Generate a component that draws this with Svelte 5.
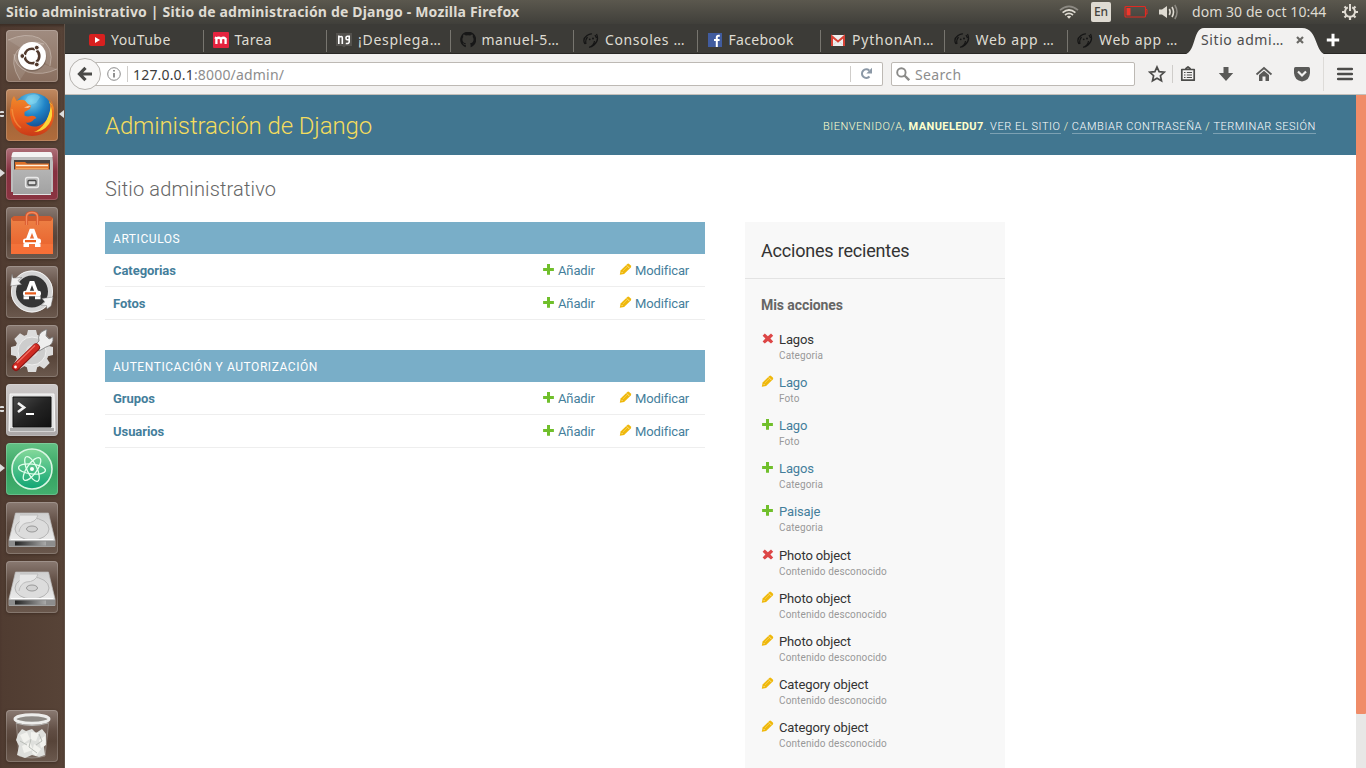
<script>
  const tabs = [
    { icon: 'youtube', label: 'YouTube', ls: 0.45 },
    { icon: 'mega', label: 'Tarea', ls: 0.35 },
    { icon: 'book', label: '¡Desplega…', ls: 0.72 },
    { icon: 'github', label: 'manuel-5…', ls: 0.5 },
    { icon: 'snake', label: 'Consoles …', ls: 0.6 },
    { icon: 'facebook', label: 'Facebook', ls: 0.3 },
    { icon: 'gmail', label: 'PythonAn…', ls: 0.8 },
    { icon: 'snake', label: 'Web app …', ls: 0.7 },
    { icon: 'snake', label: 'Web app …', ls: 0.7 }
  ];

  const launcher = [
    { id: 'dash', left: 0 },
    { id: 'firefox', left: 2, active: true },
    { id: 'files', left: 1 },
    { id: 'software', left: 0 },
    { id: 'updater', left: 0 },
    { id: 'settings', left: 0 },
    { id: 'terminal', left: 2 },
    { id: 'atom', left: 1 },
    { id: 'disk', left: 0 },
    { id: 'disk', left: 0 },
    { id: 'trash', left: 0 }
  ];

  const modules = [
    { name: 'Articulos', rows: ['Categorias', 'Fotos'] },
    { name: 'Autenticación y autorización', rows: ['Grupos', 'Usuarios'] }
  ];

  const actions = [
    { kind: 'delete', name: 'Lagos', type: 'Categoria' },
    { kind: 'change', name: 'Lago', type: 'Foto', link: true },
    { kind: 'add', name: 'Lago', type: 'Foto', link: true },
    { kind: 'add', name: 'Lagos', type: 'Categoria', link: true },
    { kind: 'add', name: 'Paisaje', type: 'Categoria', link: true },
    { kind: 'delete', name: 'Photo object', type: 'Contenido desconocido' },
    { kind: 'change', name: 'Photo object', type: 'Contenido desconocido' },
    { kind: 'change', name: 'Photo object', type: 'Contenido desconocido' },
    { kind: 'change', name: 'Category object', type: 'Contenido desconocido' },
    { kind: 'change', name: 'Category object', type: 'Contenido desconocido' }
  ];
</script>

{#snippet mark(kind)}
  <svg class="mark" viewBox="0 0 13 13" width="13" height="13">
    {#if kind === 'add'}
      <path d="M5 1h3v3.900h3.900v3H8v3.900H5V7.900H1.100v-3H5z" fill="#70bf2b" />
    {:else if kind === 'delete'}
      <path d="M3.800 1.600 6.900 4.200 10 1.600l2.200 2.200L9.400 6.600l2.800 2.800-2.200 2.200-3.100-2.600-3.100 2.600-2.200-2.200 2.800-2.800-2.800-2.800z" fill="#dd4646" />
    {:else}
      <path d="M.8 11.800l.8-4.200L8.300 1q.9-.8 1.800 0l1.700 1.600q.8.900 0 1.800L5.100 11z" fill="#efb80b" />
      <path d="M7.700 2.400l2.700 2.700M2.600 9l1 1" stroke="#fff" stroke-opacity=".8" stroke-width=".7" />
      <path d="M3.800 8l4.200-4.100" stroke="#f8d96b" stroke-width=".7" />
    {/if}
  </svg>
{/snippet}

{#snippet favicon(icon)}
  <svg class="favicon" viewBox="0 0 16 16" width="16" height="16">
    {#if icon === 'youtube'}
      <rect x="0" y="2" width="16" height="12" rx="2" fill="#d8201f" />
      <path d="M6 5l5 3-5 3z" fill="#fff" />
    {:else if icon === 'mega'}
      <rect width="16" height="16" rx="1" fill="#e5233f" />
      <path d="M3.400 12V6.800q2.300-2.200 4.600 0V11.500M8 6.800q2.300-2.200 4.600 0V12M1.800 5.500l2 .8" fill="none" stroke="#fff" stroke-width="2.300" />
    {:else if icon === 'book'}
      <path d="M0 1h16v13H10l-2 1.500L6 14H0z" fill="#54524e" />
      <path d="M2.800 12V3.500M2.300 4.500l2 .2q2-.6 2 1.300V12M13.200 7.800H11q-1-.2-1-1.700 0-1.800 1.500-1.800h1.700v5.500q0 2-3.400 1.700" fill="none" stroke="#fff" stroke-width="1.600" />
    {:else if icon === 'github'}
      <path d="M5.800 15.300v-2.500c-2 .5-2.700-.8-3.200-1.700 1.200.1 1.300 1.300 2.400 1.100.6 0 .8-.5 1-.9-2.200-.3-3.600-1.500-3.600-3.900 0-1 .3-1.800.9-2.400-.3-.8-.2-1.600.1-2.400 1 0 1.800.5 2.400.9a8.500 8.500 0 014.400 0c.7-.5 1.500-.9 2.400-.9.4.8.3 1.700.1 2.400.6.600.9 1.400.9 2.400 0 2.400-1.400 3.600-3.600 3.900.4.400.6.900.6 1.700v2.300a8 8 0 10-4.800 0z" fill="#171717" />
    {:else if icon === 'snake'}
      <path d="M2 12Q-1 7 4 3.500 7 1.500 9 2M3 12Q2 8 4.500 5M13.500 2Q16.500 8 11 13q-2.500 2.300-5 2.200M11.500 9Q11 13 7 15M12 3l1.500 3" fill="none" stroke="#151515" stroke-width="1.200" />
      <circle cx="6.700" cy="7.300" r=".9" fill="#151515" />
      <circle cx="10" cy="6.500" r="1" fill="#151515" />
    {:else if icon === 'facebook'}
      <rect x="1" y="1" width="14" height="14" fill="#415c9f" />
      <path d="M12.800 3.700h-1.300q-1.700 0-1.700 1.700V15M7 8h5.600" fill="none" stroke="#fff" stroke-width="2" />
    {:else}
      <path d="M1 3h14v11H1z" fill="#eee" />
      <path d="M2 14V4.500L8 9.500l6-5V14" fill="none" stroke="#d84236" stroke-width="2" />
      <path d="M3.500 13l3-3.500M12.500 13l-3-3.500" stroke="#ccc" stroke-width=".6" />
    {/if}
  </svg>
{/snippet}

{#snippet compass()}
  <path d="M21.300 33.500l3.700-10h2l3.700 10" fill="none" stroke="#fff" stroke-width="3.600" />
  <path d="M17.500 37h5.500v3h-5.500zM29 37h5.500v3H29z" fill="#fff" />
  <rect x="17" y="31.500" width="18" height="5.500" rx="2.200" fill="#fff" /><path d="M19 34.200h11" stroke="#ea5f1f" stroke-width="2.200" />
{/snippet}

{#snippet appicon(id)}
  <svg viewBox="0 0 52 52" width="52" height="52">
    {#if id === 'dash'}
      <g fill="none" stroke="#e6dbd4" stroke-opacity=".4" stroke-width="1">
        <path d="M2 10Q20 2 33 8 49 17 44 36" fill="#fff" fill-opacity=".1" />
        <path d="M14 50Q3 32 11 21 22 8 38 14" fill="#fff" fill-opacity=".1" />
        <path d="M51 39Q37 46 22 42 8 36 8 24" fill="#fff" fill-opacity=".1" />
      </g>
      <circle cx="26" cy="27" r="14.500" fill="#3b2a20" opacity=".3" />
      <circle cx="26" cy="26" r="14" fill="#fff" />
      <circle cx="26" cy="26" r="7.300" fill="none" stroke="#51392d" stroke-width="2.600" stroke-dasharray="13.700 1.600" stroke-dashoffset="6.800" />
      <g fill="#51392d" stroke="#fff" stroke-width="1">
        <circle cx="16.300" cy="26" r="2.400" /><circle cx="30.800" cy="17.600" r="2.400" /><circle cx="30.800" cy="34.500" r="2.400" />
      </g>
    {:else if id === 'firefox'}
      <circle cx="27" cy="24" r="20" fill="url(#globe)" />
      <path d="M22 7q9-4 12 1l-4 6-6 2-6-3z" fill="#8edcf2" opacity=".45" />
      <path d="M43 12q3 7 0 14-3 10-14 13 6 6 13-1 8-9 5-21z" fill="#ffce2b" />
      <path d="M8 7l2.500 5q4-2 8.500-.5Q21 15 25 16.500l-1 3.500-5.500 3v3.500q3 1.500 6 .5 4-1 6 2-3 1-4 3-3 2.500-7 1.500 5 5.500 13 3.500 9-3.500 11-12 2-6 0-12 3 3 3.500 8Q47 17 44 10q5 7 4 17-2 19-22 20Q9 46 5 30 3 22 5 17q0-6 3-10z" fill="url(#fox)" />
      <path d="M45 17q3 11-2 18-6 8-15 8 13-5 17-26z" fill="#ffe23c" opacity=".9" />
      <path d="M18 18.500l5-2 2 .5-3 2z" fill="#fac49a" />
      <path d="M6 20q1 13 9 19" fill="none" stroke="#f7a04a" stroke-width="1.500" opacity=".6" />
    {:else if id === 'files'}
      <path d="M8 4h36q1.500 0 2 2l1 8v30H5V14l1-8q.5-2 2-2z" fill="#bdbdbd" />
      <path d="M8 4h36q1.500 0 2 2l.6 3H5.400L6 6q.5-2 2-2z" fill="#f4f4f4" />
      <path d="M8 12h36v12H8z" fill="#494240" />
      <path d="M9 14h10l2 1.500h22V23H9z" fill="#dd6f27" />
      <path d="M10 17.500h32" stroke="#fff0dc" stroke-width="1.300" /><path d="M10 20.300h32" stroke="#f3a55c" stroke-width="1.200" />
      <path d="M7 21.500h38V46H7z" fill="url(#steel)" />
      <path d="M7 46.500h38" stroke="#e3e3e3" />
      <rect x="19.500" y="29.500" width="13" height="10" rx="2" fill="#b7b7b7" stroke="#e9e9e9" stroke-width="1.300" />
      <rect x="22" y="32.500" width="8" height="4.500" rx="1" fill="#ddd" stroke="#4a4a4a" stroke-width="1.300" />
    {:else if id === 'software'}
      <path d="M5 11h42v36H5z" fill="url(#bag)" />
      <path d="M5 37h42v10H5z" fill="#ff8a4c" opacity=".35" />
      <path d="M5 11l3-2h36l3 2-2 3H7z" fill="#d05a2c" />
      <path d="M20.500 18v-8q0-4.500 5.500-4.500t5.500 4.500v8" fill="none" stroke="#d8562b" stroke-width="3.200" />
      <path d="M20.500 18v-8q0-4.500 5.500-4.500t5.500 4.500v8" fill="none" stroke="#f28a5d" stroke-width="1.400" />
      {@render compass()}
    {:else if id === 'updater'}
      <circle cx="26" cy="25.500" r="18.500" fill="#353535" stroke="#d4d4d4" stroke-width="5" />
      <circle cx="26" cy="25.500" r="20.500" fill="none" stroke="#fff" stroke-width="1" opacity=".7" />
      <path d="M6 8l1 4 9-.5-4 3 3.500 4L4.500 20zM47 31l-11 1.500 3 3.500-4 3 5.500.5L41 43l4-3z" fill="#f1f1f1" stroke="#777" stroke-width=".5" />
      <g transform="translate(0 -6.800)">{@render compass()}</g>
    {:else if id === 'settings'}
      <g fill="#dcdcdc">
        <circle cx="26" cy="26" r="17" />
        {#each [0, 45, 90, 135] as angle}
          <path d="M22 5h8l2 8v26l-2 8h-8l-2-8V13z" transform="rotate({angle} 26 26)" />
        {/each}
      </g>
      <circle cx="26" cy="26" r="14" fill="#cdcdcd" stroke="#eee" /><circle cx="26" cy="26" r="6" fill="#ddd" />
      <path d="M29 20l4-4q-2-8 6-11l2-.5-1 6.500 3 3 4-2q1 8-7 10l-7 4z" fill="#eee" stroke="#777" stroke-width=".8" />
      <path d="M10 42L30 22.500" stroke="#8d1715" stroke-width="8" stroke-linecap="round" />
      <path d="M10 41.500L30 22" stroke="#cf2b23" stroke-width="6" stroke-linecap="round" />
      <path d="M11 38L29 20.500" stroke="#f17165" stroke-width="1.200" /><circle cx="9.500" cy="42" r="1.400" fill="#fff" />
    {:else if id === 'terminal'}
      <path d="M4 10h44l1 37H3z" fill="#e3e3e3" stroke="#f8f8f8" />
      <path d="M4 44h44v3H4z" fill="#aaa" />
      <path d="M7 13h38v30H7z" fill="url(#screen)" stroke="#111" />
      <path d="M12 19l6 4.500-6 4.500" fill="none" stroke="#f1f1f1" stroke-width="2.700" /><path d="M20 30h8" stroke="#fff" stroke-width="2" />
    {:else if id === 'atom'}
      <circle cx="26" cy="26" r="20" fill="url(#atombg)" stroke="#d9f6e3" stroke-width="1.600" />
      <g fill="none" stroke="#e2ffed" stroke-width="1.300">
        <ellipse cx="26" cy="26" rx="5" ry="13.500" transform="rotate(-25 26 26)" />
        <ellipse cx="26" cy="26" rx="5" ry="13.500" transform="rotate(35 26 26)" />
        <ellipse cx="26" cy="26" rx="5" ry="13.500" transform="rotate(96 26 26)" />
      </g>
      <circle cx="26" cy="26" r="2" fill="#fff" />
    {:else if id === 'disk'}
      <path d="M9.500 11h33L49 38v6.500H3V38z" fill="url(#plate)" stroke="#bbb" stroke-width=".7" />
      <path d="M3 38.500h46v6H3z" fill="#8d8d8d" /><path d="M9 39.500h31v4H9z" fill="url(#edge)" />
      <ellipse cx="26" cy="27" rx="17" ry="11" fill="#dcdcdc" stroke="#b5b5b5" />
      <path d="M14 13h18q-2 8-12 8-6 2-7 9" fill="#e6e6e6" stroke="#bdbdbd" />
      <ellipse cx="26" cy="27" rx="5.500" ry="3" fill="#d2d2d2" stroke="#999" />
      <path d="M5 37.500h42" stroke="#fff" />
    {:else}
      <path d="M10 10l3 36q13 4 26 0l4-36z" fill="#ddd" fill-opacity=".15" stroke="#aaa39e" stroke-opacity=".6" />
      <path d="M12 24l4-5 4 2 6-2 4 4 6-4 4 5v8l-2 5 1 8-6 2-7-2-7 3-8-3 2-9-3-6z" fill="#dedfdc" />
      <g fill="#f2f2ee">
        <path d="M14 25l7-3 3 7-6 4zM25 22l8 1-3 8-5-1zM33 30l6-4 1 9-5 3zM16 36l8-4 3 8-9 3zM28 34l7 5-5 7-4-3z" />
      </g>
      <path d="M14 31l7 4M25 29l-2 8 8 6M33 24l3 7-6 4" stroke="#b9bcb7" fill="none" />
      <ellipse cx="26" cy="9" rx="17" ry="4.300" fill="#8e8a85" stroke="#ededeb" stroke-width="3" />
      <path d="M10 13q16 5 32 0" fill="none" stroke="#b5b5b3" />
    {/if}
  </svg>
{/snippet}

<svg class="defs" width="0" height="0" aria-hidden="true">
  <defs>
    <radialGradient id="globe" cx=".45" cy=".2" r=".8"><stop offset="0" stop-color="#7ad3ef" /><stop offset=".45" stop-color="#1f83c6" /><stop offset="1" stop-color="#123a7c" /></radialGradient>
    <linearGradient id="fox" x1="0" y1="0" x2="0" y2="1"><stop offset="0" stop-color="#f08a2a" /><stop offset=".6" stop-color="#e8591c" /><stop offset="1" stop-color="#c93a17" /></linearGradient>
    <linearGradient id="steel" x1="0" y1="0" x2="0" y2="1"><stop offset="0" stop-color="#b4b4b4" /><stop offset="1" stop-color="#a2a2a2" /></linearGradient>
    <linearGradient id="plate" x1="0" y1="0" x2="0" y2="1"><stop offset="0" stop-color="#cfcfcf" /><stop offset="1" stop-color="#f0f0f0" /></linearGradient>
    <linearGradient id="bag" x1="0" y1="0" x2="0" y2="1"><stop offset="0" stop-color="#ed8146" /><stop offset=".65" stop-color="#ea6a33" /><stop offset="1" stop-color="#f5602a" /></linearGradient>
    <linearGradient id="screen" x1="0" y1="0" x2="1" y2="1"><stop offset="0" stop-color="#4a4a4a" /><stop offset=".5" stop-color="#242424" /><stop offset="1" stop-color="#111" /></linearGradient>
    <linearGradient id="atombg" x1="0" y1="0" x2="0" y2="1"><stop offset="0" stop-color="#86d99a" /><stop offset="1" stop-color="#10a574" /></linearGradient>
    <linearGradient id="edge"><stop offset="0" stop-color="#222" /><stop offset="1" stop-color="#aaa" /></linearGradient>
  </defs>
</svg>

<div class="desktop">
  <header class="panel">
    <span class="wintitle">Sitio administrativo | Sitio de administración de Django - Mozilla Firefox</span>
    <div class="indicators">
      <svg class="wifi" viewBox="0 0 20 14" width="20" height="14" fill="none" stroke-width="1.700">
        <path d="M1 5.200q9-7.500 18 0" stroke="#8d8a83" /><path d="M3.600 7.600q6.400-5.200 12.800 0M6 10q4-3.200 8 0" stroke="#dfdbd2" /><path d="M7.800 11.500q2.200-1.500 4.400 0L10 13.700z" fill="#dfdbd2" stroke="none" />
      </svg>
      <span class="lang">En</span>
      <svg class="battery" viewBox="0 0 24 14" width="24" height="14"><rect x="1" y="1.500" width="20.500" height="10.500" rx="1" fill="none" stroke="#e02a22" stroke-width="1.200" /><path d="M2.500 3H6.500v7.500h-4z" fill="#f0372c" /><path d="M22 4.500h1v4.500h-1" fill="none" stroke="#e02a22" /></svg>
      <svg class="sound" viewBox="0 0 20 16" width="20" height="16"><path d="M0 5.500h3L8 2v12l-5-3.500H0z" fill="#dfdbd2" /><path d="M10.300 5q1.700 3 0 6M13 3q3 5 0 10" stroke="#dfdbd2" fill="none" stroke-width="1.600" /><path d="M15.800 1q4.500 7 0 14" stroke="#8d8a83" fill="none" stroke-width="1.500" /></svg>
      <span class="clock">dom 30 de oct 10:44</span>
      <svg class="gear" viewBox="0 0 18 18" width="18" height="18" fill="none" stroke="#dfdbd2">
        <path d="M6.800 4.300a5 5 0 104.400 0" stroke-width="2" /><path d="M9 1v7" stroke-width="2" />
        <path d="M3.500 3.500l2 2M14.500 3.500l-2 2M1 9h3M14 9h3M3.500 14.500l2-2M14.500 14.500l-2-2M9 14v3" stroke-width="2.200" />
      </svg>
    </div>
  </header>

  <nav class="launcher">
    {#each launcher as app}
      <div class="slot {app.id}">
        {#if app.left === 2}<i class="pips"></i>{:else if app.left === 1}<i class="arrow"></i>{/if}
        <div class="tile">{@render appicon(app.id)}</div>
        {#if app.active}<i class="focus"></i>{/if}
      </div>
    {/each}
  </nav>

  <section class="browser">
    <div class="tabs">
      {#each tabs as tab, i}
        <div class="tab" class:last={i === tabs.length - 1}>
          {@render favicon(tab.icon)}<span style="letter-spacing:{tab.ls}px">{tab.label}</span>
        </div>
      {/each}
      <div class="tab current">
        <svg class="shape" viewBox="0 0 146 28" width="146" height="28"><path d="M0 28C15 28 10 1 22 1h98c17 0 12 27 26 27z" fill="#f2f1f0" /></svg>
        <span>Sitio admi…</span>
        <svg class="close" viewBox="0 0 8 8" width="8" height="8"><path d="M1 1l6 6M7 1L1 7" stroke="#6a6965" stroke-width="2.200" /></svg>
      </div>
      <svg class="plus" viewBox="0 0 14 14" width="14" height="14"><path d="M7 .8v12.400M.8 7h12.400" stroke="#fff" stroke-width="3" /></svg>
    </div>

    <div class="toolbar">
      <div class="back">
        <svg viewBox="0 0 16 16" width="16" height="16"><path d="M8.500 1.800L2.500 8l6 6.200M2.500 8H15" fill="none" stroke="#4a4a48" stroke-width="3.200" /></svg>
      </div>
      <div class="url">
        <svg class="info" viewBox="0 0 14 14" width="14" height="14"><circle cx="7" cy="7" r="6.300" fill="none" stroke="#8b8b8b" /><path d="M7 6v4.500M7 3v1.500" stroke="#777" stroke-width="1.600" /></svg>
        <i class="rule"></i>
        <span class="address">127.0.0.1<em>:8000/admin/</em></span>
        <i class="rule end"></i>
        <svg class="reload" viewBox="0 0 13 13" width="13" height="13"><path d="M9.500 9.500A4.300 4.300 0 119.200 3.500" fill="none" stroke="#8b98a6" stroke-width="2" /><path d="M12 .8v5.700H6.300z" fill="#8b98a6" /></svg>
      </div>
      <div class="search">
        <svg viewBox="0 0 14 14" width="14" height="14" fill="none" stroke="#8a8a88"><circle cx="5.400" cy="5.400" r="4.200" stroke-width="1.900" /><path d="M8.500 8.500l4.700 4.700" stroke-width="2.400" /></svg>
        <span>Search</span>
      </div>
      <div class="tools">
        <svg viewBox="0 0 18 18" width="18" height="18"><path d="M9 2l2.100 4.700 5.100.5-3.800 3.500 1.100 5.100L9 13.200l-4.500 2.600 1.100-5.100L1.800 7.200l5.100-.5z" fill="none" stroke="#4c4c4a" stroke-width="1.700" /></svg>
        <i class="rule"></i>
        <svg viewBox="0 0 18 18" width="18" height="18"><path d="M2.800 4.500h12.400V15.200H2.800zM6.500 4l2.500-2.200L11.500 4" fill="none" stroke="#4c4c4a" stroke-width="1.700" stroke-linejoin="round" /><path d="M5 7.500h1.500M5 10h1.500M5 12.500h1.500M7.800 7.500H13M7.800 10H13M7.800 12.500H13" stroke="#4c4c4a" stroke-width="1.100" /></svg>
        <svg viewBox="0 0 18 18" width="18" height="18"><path d="M6.500 2h5v6h4.700L9 16 1.800 8h4.700z" fill="#5a5a58" /></svg>
        <svg viewBox="0 0 18 18" width="18" height="18"><path d="M1.500 9.500L9 3l7.500 6.500" fill="none" stroke="#5a5a58" stroke-width="1.800" /><path d="M4 10l5-4.300L14 10v6h-3.500v-4.500h-3V16H4z" fill="#5a5a58" /></svg>
        <svg viewBox="0 0 18 18" width="18" height="18"><path d="M1 3.500q0-1.500 1.500-1.500h13Q17 2 17 3.500V8q-.5 7.500-8 8.500Q1.500 15.500 1 8z" fill="#5a5a58" /><path d="M5 6.500l4 4 4-4" fill="none" stroke="#f2f1f0" stroke-width="2.200" /></svg>
        <i class="rule tall"></i>
        <svg viewBox="0 0 18 18" width="18" height="18"><path d="M2.200 4h13.600M2.200 9h13.600M2.200 14h13.600" stroke="#4c4c4a" stroke-width="2.600" stroke-linecap="round" /></svg>
      </div>
    </div>

    <div class="view">
      <main class="page">
        <div class="branding">
          <h1>Administración de Django</h1>
          <div class="user">Bienvenido/a, <b>Manueledu7</b>. <a href="#site">Ver el sitio</a> / <a href="#password">Cambiar contraseña</a> / <a href="#logout">Terminar sesión</a></div>
        </div>
        <div class="content">
          <h2 class="title">Sitio administrativo</h2>
          <div class="columns">
            <div class="modules">
              {#each modules as mod}
                <section class="module">
                  <h3>{mod.name}</h3>
                  {#each mod.rows as row}
                    <div class="row">
                      <b>{row}</b>
                      <span class="addlink">{@render mark('add')}Añadir</span>
                      <span class="changelink">{@render mark('change')}Modificar</span>
                    </div>
                  {/each}
                </section>
              {/each}
            </div>
            <aside>
              <h2>Acciones recientes</h2>
              <h3>Mis acciones</h3>
              <ul>
                {#each actions as action}
                  <li>
                    {@render mark(action.kind)}
                    <div class="what"><span class:link={action.link}>{action.name}</span><small>{action.type}</small></div>
                  </li>
                {/each}
              </ul>
            </aside>
          </div>
        </div>
      </main>
      <div class="scroll"><i></i></div>
    </div>
  </section>
</div>

<style>
  :global(body) { margin: 0; overflow: hidden; }
  svg { display: block; flex: none; }
  .defs { position: absolute; }
  .desktop {
    width: 1366px; height: 768px; overflow: hidden;
    display: grid; grid-template: 24px 744px / 65px 1301px;
    font-family: "Noto Sans", "Open Sans", sans-serif; font-size: 14px;
  }
  .panel {
    grid-column: 1 / 3; display: flex; align-items: center; justify-content: space-between;
    background: linear-gradient(#5b584e, #403f3a); color: #dfdbd2; padding: 0 7px 0 6px; white-space: nowrap;
  }
  .wintitle { font-weight: 700; font-size: 14px; letter-spacing: .18px; line-height: 23px; height: 24px; }
  .indicators { display: flex; align-items: center; }
  .lang { background: #dfdbd2; color: #45433d; width: 20px; height: 20px; line-height: 20px; border-radius: 2px; text-align: center; font-size: 12px; font-weight: 500; margin: 0 13px 0 12px; }
  .sound { margin: 0 13px 0 11px; }
  .clock { width: 135px; margin-right: 14px; letter-spacing: .06px; line-height: 24px; height: 24px; }

  .launcher {
    display: flex; flex-direction: column; gap: 7px; padding-top: 6px; box-sizing: border-box;
    background: linear-gradient(90deg, #503c31, #574337); border-right: 1px solid #625348; box-shadow: inset 0 3px 3px -1px #3b2d25;
  }
  .slot { position: relative; height: 52px; padding-left: 6px; flex: none; }
  .slot.trash { margin-top: 90px; }
  .tile {
    width: 52px; height: 52px; border-radius: 4px; overflow: hidden;
    background: linear-gradient(#8a7a72, #604d43 40%, #574439 60%, #6b594e);
    box-shadow: inset 0 0 0 1px #ffffff2e, 0 1px 3px #2b1d1680;
  }
  .dash .tile { background: linear-gradient(#a08c80, #8a7060); }
  .firefox .tile { background: linear-gradient(#c08a62, #9f6237 45%, #b06c3c); }
  .files .tile { background: linear-gradient(#ae7079, #86303f 45%, #8a3441); }
  .terminal .tile { background: linear-gradient(#cdc9c9, #aba7a7); }
  .atom .tile { background: linear-gradient(#62c284, #35a261 55%, #43b06f); }
  .pips, .arrow, .focus { position: absolute; width: 0; height: 0; }
  .pips { left: 0; top: 22px; width: 4px; height: 2px; border: solid #ddd; border-width: 2.500px 0; border-radius: 1px; }
  .arrow { left: 0; top: 21px; border: solid transparent; border-width: 4px 0 4px 5px; border-left-color: #ddd; }
  .focus { right: 0; top: 21px; border: solid transparent; border-width: 4px 5px 4px 0; border-right-color: #ddd; }

  .browser { display: flex; flex-direction: column; min-width: 0; }
  .tabs { height: 30px; flex: none; display: flex; align-items: center; background: #3c3b37; box-shadow: inset 0 -1px #292825; padding-left: 15px; color: #dfdbd2; }
  .tab { width: 123.500px; height: 22px; margin-top: 3px; box-sizing: border-box; flex: none; display: flex; align-items: center; gap: 6px; padding-left: 9px; border-right: 1px solid #77756f; white-space: nowrap; }
  .tab span { line-height: 18px; height: 20px; }
  .favicon { margin-top: -1px; }
  .tab.last { border: 0; }
  .tab.current { position: relative; width: 133px; padding-left: 9.500px; border: 0; color: #4c4c4c; }
  .tab.current span { position: relative; width: 89px; letter-spacing: .6px; }
  .shape { position: absolute; left: -10px; top: -3px; }
  .close { position: relative; margin-top: -2px; }
  .plus { margin-top: 2px; margin-left: 1.500px; }

  .toolbar { height: 41px; flex: none; box-sizing: border-box; display: flex; align-items: center; background: #f2f1f0; border-bottom: 1px solid #c3bfba; padding: 0 12px 1px 4px; }
  .back { width: 32px; height: 32px; box-sizing: border-box; border: 1px solid #b5b2ae; border-radius: 50%; background: #f7f6f5; display: grid; place-items: center; position: relative; flex: none; }
  .url, .search { height: 24px; box-sizing: border-box; border: 1px solid #bdb9b4; border-radius: 2px; background: #fff; display: flex; align-items: center; }
  .url { width: 790px; margin-left: -8px; padding-left: 14px; border-left: 0; flex: none; }
  .rule { width: 1px; height: 16px; background: #cfcdca; flex: none; }
  .url .rule { margin: 0 5px 0 6px; }
  .address { flex: 1; color: #3c3c3c; letter-spacing: .18px; padding-top: 1px; }
  .address em { font-style: normal; color: #8d8d8d; }
  .url .rule.end { margin: 0 9px 0 0; }
  .reload { margin-right: 9px; }
  .search { width: 244px; margin-left: 8px; padding-left: 4px; gap: 5px; color: #8d8d8d; flex: none; }
  .search span { letter-spacing: .35px; padding-top: 1px; }
  .tools { display: flex; align-items: center; margin-left: 13px; }
  .tools svg { margin-right: 20px; }
  .tools svg:first-child { margin-right: 6px; }
  .tools svg:nth-last-child(3) { margin-right: 12px; }
  .tools svg:last-child { margin: 0 0 0 12px; }
  .tools .rule { margin-right: 6px; height: 18px; }
  .tools .rule.tall { height: 34px; margin: 0; background: #dddbd8; }

  .view { flex: 1; display: flex; min-height: 0; font-family: Roboto, sans-serif; }
  .page { flex: 1; background: #fff; overflow: hidden; }
  .scroll { width: 10px; background: #e8e7e6; }
  .scroll i { display: block; height: 619px; background: #f08c68; border-radius: 0 0 1px 1px; }
  h1, h2, h3, ul { margin: 0; padding: 0; font-weight: 400; }
  .branding { height: 60px; box-sizing: border-box; background: #417690; padding: 0 40px; display: flex; align-items: center; justify-content: space-between; }
  h1 { font-size: 24px; font-weight: 300; color: #f5dd5d; line-height: 60px; letter-spacing: -.12px; padding-top: 2px; }
  .user { font-size: 11px; font-weight: 300; letter-spacing: .53px; text-transform: uppercase; color: #ffc; line-height: 14px; padding-top: 3px; }
  .user b { font-weight: 700; letter-spacing: .4px; }
  .user a { color: #fff; text-decoration: none; border-bottom: 1px solid #ffffff50; letter-spacing: .56px; }
  .content { padding: 21px 40px; }
  .title { font-size: 20px; font-weight: 300; color: #666; line-height: 27px; margin-bottom: 19px; letter-spacing: .15px; }
  .columns { display: flex; gap: 40px; }
  .modules { width: 600px; }
  .module { margin-bottom: 30px; }
  .module h3 { height: 32px; line-height: 34px; background: #79aec8; color: #fff; padding-left: 8px; font-size: 12px; letter-spacing: .56px; text-transform: uppercase; }
  .row { height: 33px; box-sizing: border-box; border-bottom: 1px solid #eee; display: grid; grid-template-columns: 429px 77px 1fr; padding-left: 8px; font-size: 13px; letter-spacing: -.12px; line-height: 33px; color: #447e9b; }
  .row b { letter-spacing: -.06px; }
  .row span { display: flex; gap: 3px; }
  .row .mark { margin-top: 9px; }
  aside { width: 260px; height: 560px; background: #f8f8f8; }
  aside h2 { height: 57px; box-sizing: border-box; border-bottom: 1px solid #e3e3e3; font-size: 18px; letter-spacing: -.2px; color: #333; line-height: 58px; padding-left: 16px; }
  aside h3 { font-size: 14px; font-weight: 700; color: #666; line-height: 20px; padding: 16px 16px 13.700px; letter-spacing: -.08px; }
  li { list-style: none; display: flex; gap: 5px; height: 43.200px; padding-left: 16px; color: #333; }
  li .mark { margin-top: 3px; }
  .what { font-size: 13px; line-height: 21px; letter-spacing: -.12px; }
  .what span { display: block; }
  .what .link { color: #447e9b; }
  small { display: block; font-size: 10px; letter-spacing: .12px; color: #999; line-height: 12.600px; }
</style>
